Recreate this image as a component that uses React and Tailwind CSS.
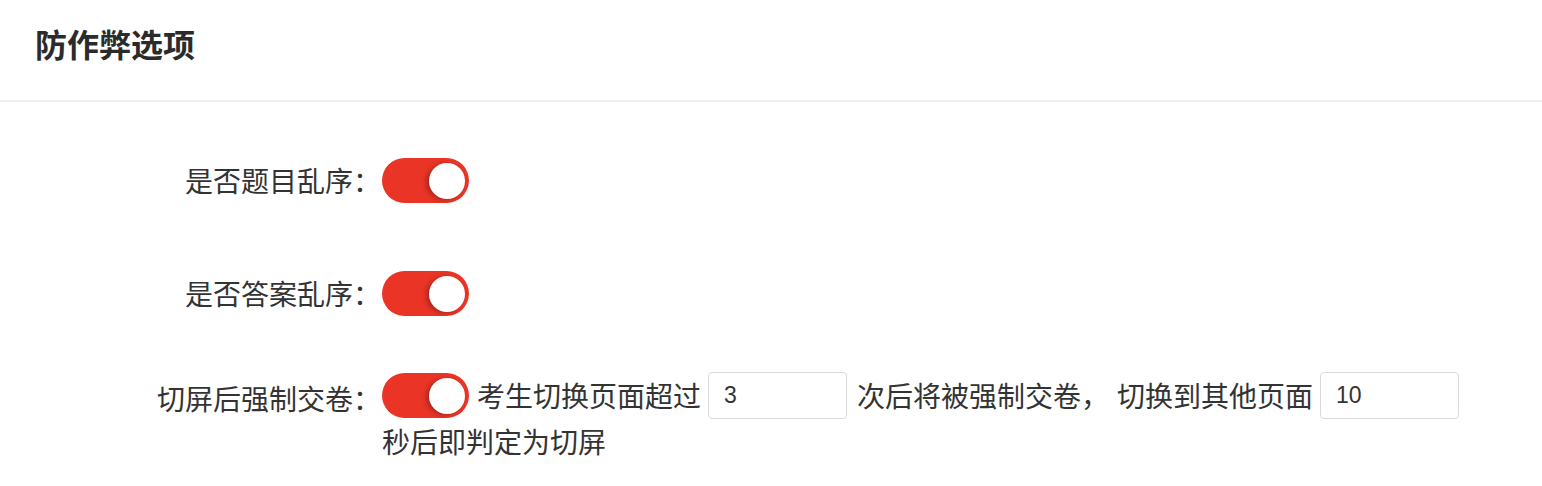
import React from "react";

const CJK = { fontFamily: '"Noto Sans CJK SC", "Noto Sans", sans-serif' };

function Toggle() {
  return (
    <span className="relative block h-[45px] w-[87px] shrink-0 rounded-full bg-[#e93426]">
      <span className="absolute right-[4px] top-[4.5px] h-[36px] w-[36px] rounded-full bg-white shadow-[-3px_1px_4px_rgba(0,0,0,0.25)]" />
    </span>
  );
}

function NumInput({ value }) {
  return (
    <span
      className="flex h-[47px] w-[139px] shrink-0 items-center rounded-[4px] border border-[#dadada] bg-white pl-[15px] text-[23px] leading-none text-[#333]"
      style={{ fontFamily: '"Liberation Sans", Arial, sans-serif' }}
    >
      {value}
    </span>
  );
}

export default function App() {
  return (
    <div className="w-[1542px] min-h-[486px] bg-white text-[#333]" style={CJK}>
      <div className="h-[102px] border-b-2 border-[#efefef] pl-[35px] pt-[22px]">
        <h1 className="h-[42px] text-[32px] font-bold leading-[42px] text-[#2b2b2b]">防作弊选项</h1>
      </div>

      <div className="mt-[56px] flex h-[45px] items-center">
        <div className="h-[45px] w-[381px] text-right text-[28px] leading-[45px]">是否题目乱序：</div>
        <div className="ml-[1px]">
          <Toggle />
        </div>
      </div>

      <div className="mt-[68px] flex h-[45px] items-center">
        <div className="h-[45px] w-[381px] text-right text-[28px] leading-[45px]">是否答案乱序：</div>
        <div className="ml-[1px]">
          <Toggle />
        </div>
      </div>

      <div className="mt-[56px] flex items-start">
        <div className="h-[47px] w-[381px] pt-[5px] text-right text-[28px] leading-[42px]">切屏后强制交卷：</div>
        <div className="ml-[1px] flex flex-1 flex-wrap items-center text-[28px]">
          <div className="flex h-[47px] items-center">
            <Toggle />
          </div>
          <span className="ml-[8px] h-[47px] leading-[47px]">考生切换页面超过</span>
          <span className="ml-[7px]">
            <NumInput value="3" />
          </span>
          <span className="ml-[10px] h-[47px] leading-[47px]">次后将被强制交卷，</span>
          <span className="ml-[8px] h-[47px] leading-[47px]">切换到其他页面</span>
          <span className="ml-[7px]">
            <NumInput value="10" />
          </span>
          <span className="h-[44px] leading-[44px]">秒后即判定为切屏</span>
        </div>
      </div>
    </div>
  );
}
